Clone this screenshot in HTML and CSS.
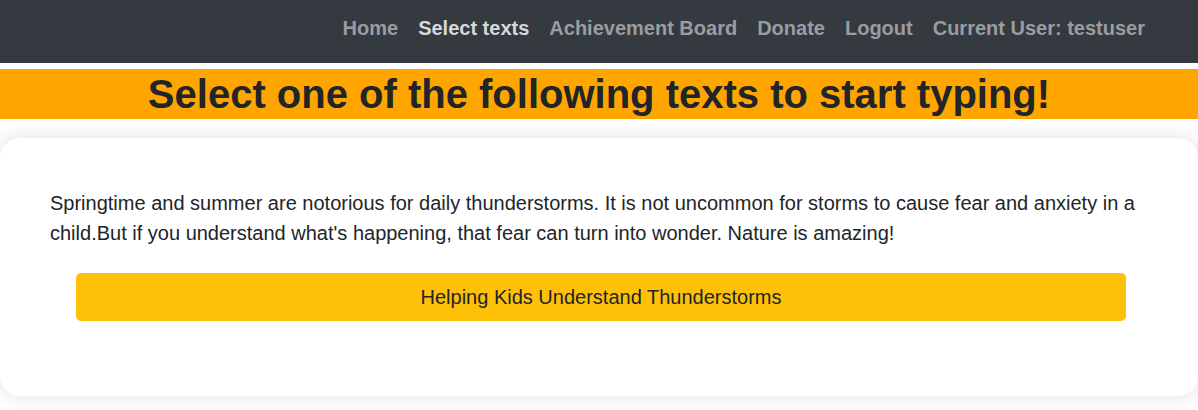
FILE: index.html
```html
<!DOCTYPE html>
<html lang="en">
<head>
<meta charset="utf-8">
<title>Select texts</title>
<link rel="stylesheet" href="styles.css">
</head>
<body>
<nav class="navbar">
  <a class="nav-link" href="#">Home</a>
  <a class="nav-link active" href="#">Select texts</a>
  <a class="nav-link" href="#">Achievement Board</a>
  <a class="nav-link" href="#">Donate</a>
  <a class="nav-link" href="#">Logout</a>
  <a class="nav-link" href="#">Current User: testuser</a>
</nav>
<main class="page">
  <h1 class="banner">Select one of the following texts to start typing!</h1>
  <section class="card">
    <p class="excerpt">Springtime and summer are notorious for daily thunderstorms. It is not uncommon for storms to cause fear and anxiety in a child.But if you understand what's happening, that fear can turn into wonder. Nature is amazing!</p>
    <button class="choice" type="button">Helping Kids Understand Thunderstorms</button>
  </section>
</main>
</body>
</html>
```
FILE: styles.css
```css
* {
  box-sizing: border-box;
}

body {
  margin: 0;
  background: #fff;
  color: #212529;
  font-family: "Liberation Sans", Arial, sans-serif;
  font-size: 20px;
  line-height: 30px;
}

.navbar {
  display: flex;
  justify-content: flex-end;
  gap: 20px;
  padding: 13px 53px 20px;
  background: #343a40;
}

.nav-link {
  color: #9a9da0;
  font-weight: 700;
  text-decoration: none;
}

.nav-link.active {
  color: #d6d8d9;
}

.page {
  padding: 6px 0 14px;
}

.banner {
  margin: 0 0 19px;
  background: orange;
  font-size: 40px;
  line-height: 50px;
  text-align: center;
}

.card {
  padding: 50px 50px 75px;
  border-radius: 20px;
  box-shadow: 0 0 20px rgba(0, 0, 0, 0.13);
}

.excerpt {
  margin: 0 0 25px;
}

.choice {
  display: block;
  width: calc(100% - 48px);
  margin: 0 22px 0 26px;
  padding: 9px 12px;
  border: 0;
  border-radius: 5px;
  background: #ffc107;
  color: #212529;
  font: inherit;
}
```
